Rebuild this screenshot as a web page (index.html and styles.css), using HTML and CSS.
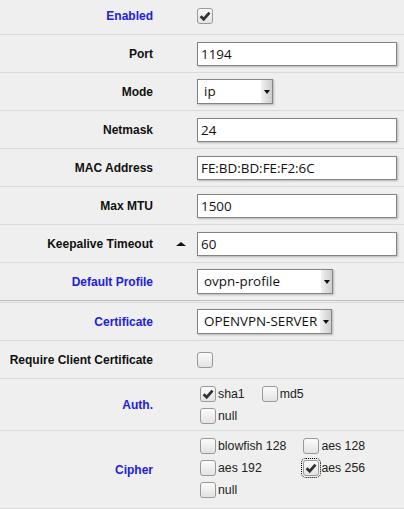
FILE: index.html
```html
<!DOCTYPE html>
<html lang="en">
<head>
    <meta charset="UTF-8">
    <meta name="viewport" content="width=device-width, initial-scale=1.0">
    <title>OpenVPN Server</title>
    <link rel="stylesheet" href="styles.css">
</head>
<body>
    <div class="form">
        <div class="row">
            <div class="label blue">Enabled</div>
            <div class="extra"></div>
            <div class="field">
                <span class="cb on"><svg viewBox="0 0 12 12"><path d="M1.6 6.2 L4.7 9.2 L10.5 2.6"/></svg></span>
            </div>
        </div>

        <div class="row">
            <div class="label">Port</div>
            <div class="extra"></div>
            <div class="field"><input class="input" type="text" value="1194"></div>
        </div>

        <div class="row">
            <div class="label">Mode</div>
            <div class="extra"></div>
            <div class="field">
                <div class="select select-mode"><span class="val">ip</span><span class="arrow"></span></div>
            </div>
        </div>

        <div class="row">
            <div class="label">Netmask</div>
            <div class="extra"></div>
            <div class="field"><input class="input" type="text" value="24"></div>
        </div>

        <div class="row">
            <div class="label">MAC Address</div>
            <div class="extra"></div>
            <div class="field"><input class="input" type="text" value="FE:BD:BD:FE:F2:6C"></div>
        </div>

        <div class="row">
            <div class="label">Max MTU</div>
            <div class="extra"></div>
            <div class="field"><input class="input" type="text" value="1500"></div>
        </div>

        <div class="row">
            <div class="label">Keepalive Timeout</div>
            <div class="extra"><span class="up"></span></div>
            <div class="field"><input class="input" type="text" value="60"></div>
        </div>

        <div class="row row-end">
            <div class="label blue">Default Profile</div>
            <div class="extra"></div>
            <div class="field">
                <div class="select select-profile"><span class="val">ovpn-profile</span><span class="arrow"></span></div>
            </div>
        </div>

        <div class="section-break"></div>

        <div class="row">
            <div class="label blue">Certificate</div>
            <div class="extra"></div>
            <div class="field">
                <div class="select select-cert"><span class="val">OPENVPN-SERVER</span><span class="arrow"></span></div>
            </div>
        </div>

        <div class="row">
            <div class="label">Require Client Certificate</div>
            <div class="extra"></div>
            <div class="field"><span class="cb"></span></div>
        </div>

        <div class="row">
            <div class="label blue">Auth.</div>
            <div class="extra"></div>
            <div class="field">
                <div class="opts">
                    <label class="opt"><span class="cb on"><svg viewBox="0 0 12 12"><path d="M1.6 6.2 L4.7 9.2 L10.5 2.6"/></svg></span>sha1</label>
                    <label class="opt"><span class="cb"></span>md5</label>
                    <label class="opt"><span class="cb"></span>null</label>
                </div>
            </div>
        </div>

        <div class="row">
            <div class="label blue">Cipher</div>
            <div class="extra"></div>
            <div class="field">
                <div class="opts opts-last">
                    <label class="opt"><span class="cb"></span>blowfish 128</label>
                    <label class="opt"><span class="cb"></span>aes 128</label>
                    <label class="opt"><span class="cb"></span>aes 192</label>
                    <label class="opt"><span class="cb on focus"><svg viewBox="0 0 12 12"><path d="M1.6 6.2 L4.7 9.2 L10.5 2.6"/></svg></span>aes 256</label>
                    <label class="opt"><span class="cb"></span>null</label>
                </div>
            </div>
        </div>
    </div>
</body>
</html>
```

FILE: styles.css
```css
body {
    margin: 0;
    background-color: #efefef;
    font-family: "Liberation Sans", Arial, sans-serif;
    font-size: 12px;
    color: #111;
    overflow: hidden;
}

.form {
    margin-top: -3px;
}

.row {
    display: grid;
    grid-template-columns: 153px 44px 1fr;
    align-items: center;
    min-height: 37px;
    border-bottom: 1px solid #dadada;
}

.row-end {
    border-bottom-color: #bcbcbc;
}

.section-break {
    height: 1px;
    margin-top: 1px;
    background-color: #dadada;
}

.label {
    text-align: right;
    font-weight: bold;
}

.blue {
    color: #2020e0;
}

.extra {
    display: flex;
    justify-content: flex-end;
    padding-right: 11px;
}

.up {
    width: 0;
    height: 0;
    border-left: 5px solid transparent;
    border-right: 5px solid transparent;
    border-bottom: 4px solid #111;
}

.field {
    display: flex;
    align-items: center;
}

.input {
    width: 200px;
    height: 24px;
    box-sizing: border-box;
    margin: 0;
    padding: 0 3px;
    border: 1px solid #858585;
    background-color: #fff;
    box-shadow: 1px 1px 2px rgba(0, 0, 0, 0.25);
    font-family: "Open Sans", sans-serif;
    font-size: 13.4px;
    color: #111;
}

.select {
    display: flex;
    height: 25px;
    box-sizing: border-box;
    border: 1px solid #858585;
    background-color: #fff;
    box-shadow: 1px 1px 2px rgba(0, 0, 0, 0.25);
    font-family: "Open Sans", sans-serif;
    font-size: 13.4px;
    color: #111;
}

.select-mode {
    width: 76px;
}

.select-profile {
    width: 136px;
}

.select-cert {
    width: 135px;
}

.select .val {
    flex: 1;
    padding-left: 6px;
    line-height: 23px;
    white-space: nowrap;
    overflow: hidden;
}

.select .arrow {
    width: 11px;
    display: flex;
    align-items: center;
    justify-content: center;
    background: linear-gradient(to right, #f2f2f2, #cdcdcd);
}

.select .arrow::after {
    content: "";
    width: 0;
    height: 0;
    border-left: 3px solid transparent;
    border-right: 3px solid transparent;
    border-top: 4px solid #111;
}

.cb {
    width: 16px;
    height: 16px;
    box-sizing: border-box;
    display: inline-flex;
    align-items: center;
    justify-content: center;
    border: 1px solid #999;
    border-radius: 3px;
    background: linear-gradient(#fbfbfb, #e3e3e3);
}

.cb svg {
    width: 12px;
    height: 12px;
}

.cb path {
    fill: none;
    stroke: #333;
    stroke-width: 2.8;
}

.focus {
    outline: 1px dotted #000;
    outline-offset: 1px;
}

.opts {
    display: grid;
    grid-template-columns: auto auto;
    justify-content: start;
    column-gap: 14px;
    row-gap: 6px;
    padding: 7px 0 6px;
}

.opts-last {
    padding-bottom: 10px;
}

.opt {
    display: flex;
    align-items: center;
    gap: 2px;
    font-size: 12.3px;
    color: #222;
}

.opt .cb {
    margin-left: 3px;
}
```
